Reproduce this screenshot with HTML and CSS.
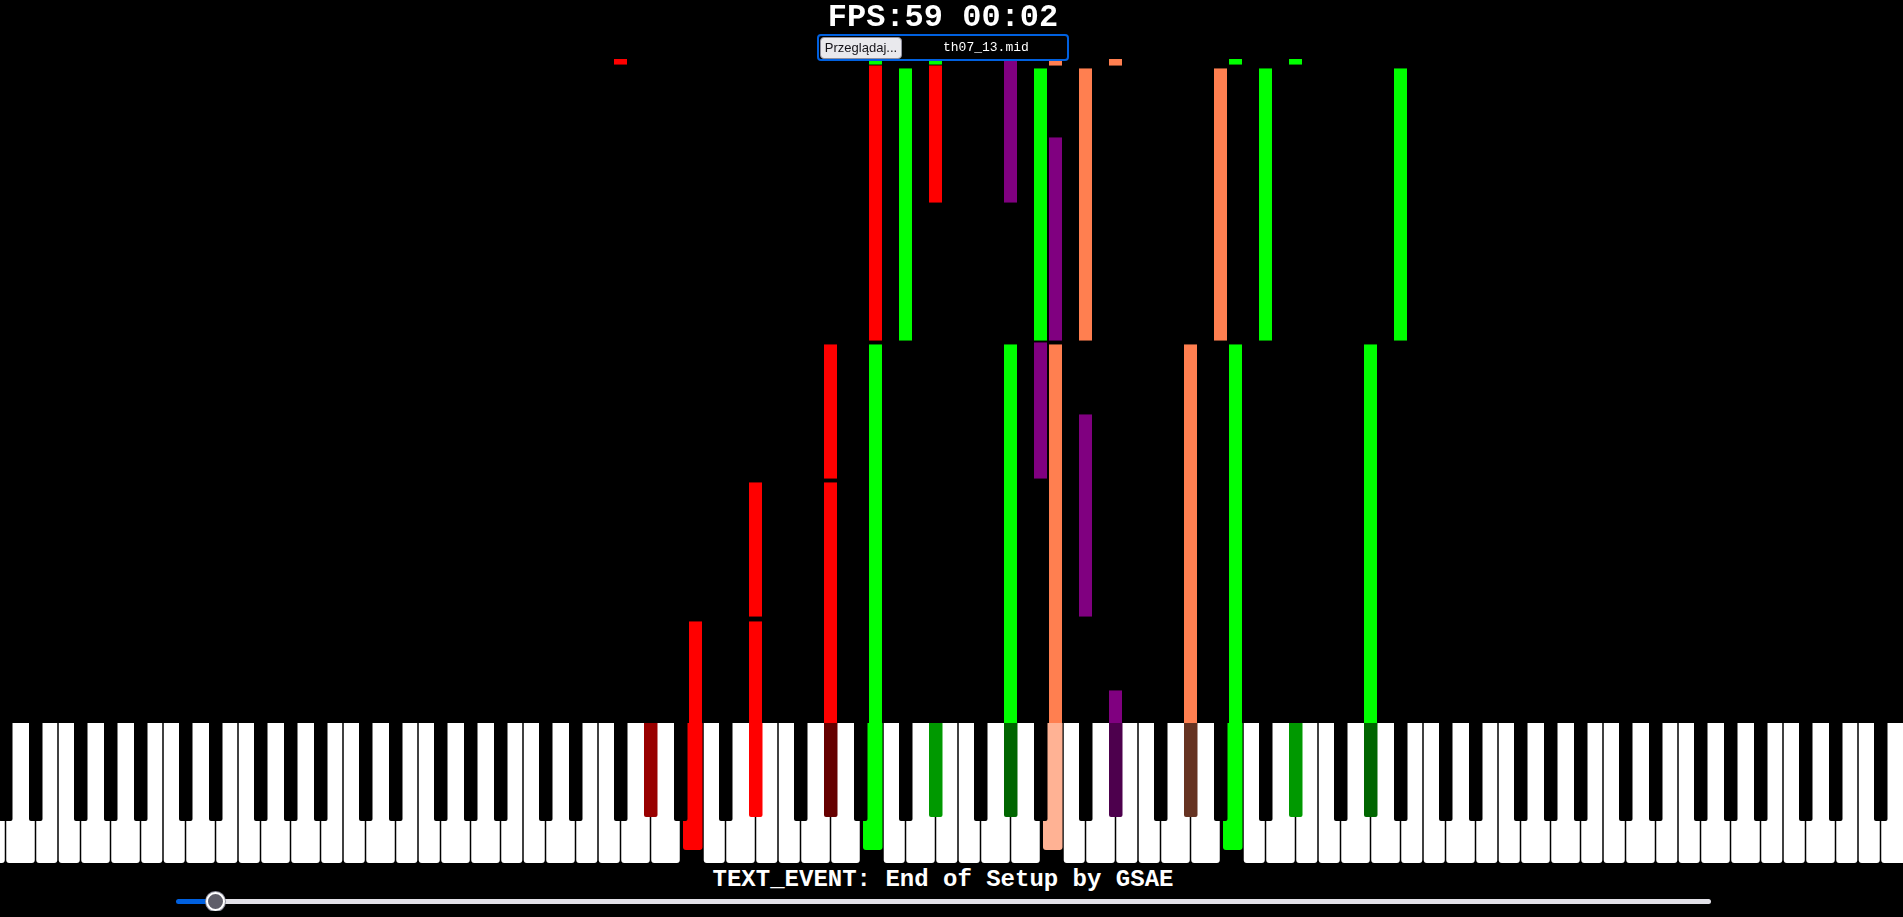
FILE: index.html
```html
<!DOCTYPE html>
<html>
    <head>
        <meta charset="utf-8">
        <title>MIDI Player</title>
        <link rel="stylesheet" href="styles.css">
    </head>
    <body>
        <div class="player">
            <canvas id="roll" class="roll" width="1903" height="863"></canvas>
            <div class="hud">
                <div class="fps" id="fps">FPS:59 00:02</div>
                <label class="picker">
                    <span class="picker-button">Przeglądaj...</span>
                    <span class="picker-name">th07_13.mid</span>
                </label>
            </div>
        </div>
        <div class="footer">
            <div class="text-event" id="event">TEXT_EVENT: End of Setup by GSAE</div>
            <input type="range" class="seek" id="seek" min="0" max="100" value="2">
        </div>
        <script src="app.js"></script>
    </body>
</html>
```

FILE: styles.css
```css
body {
    margin: 0;
    padding: 0;
    background: #000;
    overflow: hidden;
    font-family: "Liberation Mono", monospace;
}
.player {
    position: relative;
    width: 1903px;
    height: 863px;
}
.roll {
    display: block;
}
.hud {
    position: absolute;
    top: 0;
    left: 0;
    width: 1886px;
    display: flex;
    flex-direction: column;
    align-items: center;
}
.fps {
    font: bold 32px/36px "Liberation Mono", monospace;
    color: #fff;
    margin-bottom: -2px;
}
.picker {
    display: flex;
    align-items: flex-start;
    box-sizing: border-box;
    width: 252px;
    height: 27px;
    padding: 1px 0 0 1px;
    border: 2px solid #0060df;
    border-radius: 4px;
    background: #000;
}
.picker-button {
    box-sizing: border-box;
    width: 82px;
    height: 22px;
    line-height: 20px;
    text-align: center;
    background: #e9e9ed;
    border: 1px solid #8f8f9d;
    border-radius: 4px;
    color: #15141a;
    font: 13px/20px "Liberation Sans", Arial, sans-serif;
}
.picker-name {
    padding-left: 41px;
    color: #fff;
    font: 13px/22px "Liberation Mono", monospace;
}
.footer {
    width: 1886px;
    display: flex;
    flex-direction: column;
    align-items: center;
    padding-top: 5px;
}
.text-event {
    font: bold 24px/24px "Liberation Mono", monospace;
    color: #fff;
}
.seek {
    -webkit-appearance: none;
    appearance: none;
    width: 1535px;
    height: 19px;
    margin: 0;
    background: transparent;
}
.seek::-webkit-slider-runnable-track {
    height: 5px;
    border-radius: 3px;
    background: linear-gradient(to right, #0060df 0 39px, #e1e0e7 39px);
}
.seek::-webkit-slider-thumb {
    -webkit-appearance: none;
    width: 19px;
    height: 19px;
    margin-top: -7px;
    box-sizing: border-box;
    border-radius: 50%;
    background: #5f5e69;
    border: 2px solid #fff;
    box-shadow: 0 0 0 1px #8f8f9d;
}
```

FILE: app.js
```js
var canvas = document.getElementById('roll');
var ctx = canvas.getContext('2d');

var ROLL_TOP = 59;
var KEY_TOP = 723;
var KEY_HEIGHT = 140;
var BLACK_HEIGHT = 98;
var BLACK = [1, 3, 6, 8, 10];

function isBlack(n) { return BLACK.indexOf(((n % 12) + 12) % 12) >= 0; }
function keyX(n) { return 15 * n - 16; }
function center(n) { return 15 * n - 9.5; }

// falling notes: [key, top, bottom, colour]
var notes = [
    [42, 40, 65, '#ff0000'],
    [59, 40, 65, '#00ff00'],
    [59, 65, 341, '#ff0000'],
    [61, 68, 341, '#00ff00'],
    [63, 40, 65, '#00ff00'],
    [63, 65, 203, '#ff0000'],
    [68, 40, 203, '#800080'],
    [70, 68, 341, '#00ff00'],
    [71, 40, 66, '#ff7f50'],
    [71, 137, 341, '#800080'],
    [73, 68, 341, '#ff7f50'],
    [75, 40, 66, '#ff7f50'],
    [82, 68, 341, '#ff7f50'],
    [83, 40, 65, '#00ff00'],
    [85, 68, 341, '#00ff00'],
    [87, 40, 65, '#00ff00'],
    [94, 68, 341, '#00ff00'],
    [56, 344, 479, '#ff0000'],
    [56, 482, 730, '#ff0000'],
    [59, 344, 730, '#00ff00'],
    [68, 344, 730, '#00ff00'],
    [70, 342, 479, '#800080'],
    [71, 344, 730, '#ff7f50'],
    [73, 414, 617, '#800080'],
    [80, 344, 730, '#ff7f50'],
    [83, 344, 730, '#00ff00'],
    [92, 344, 730, '#00ff00'],
    [51, 482, 617, '#ff0000'],
    [51, 621, 730, '#ff0000'],
    [47, 621, 730, '#ff0000'],
    [75, 690, 730, '#800080']
];

// keys held down right now
var pressed = {
    44: '#990000', 47: '#ff0000', 51: '#ff0000', 56: '#660000',
    59: '#00ff00', 63: '#009900', 68: '#006600', 71: '#ffb294',
    75: '#4d004d', 80: '#663322', 83: '#00ff00', 87: '#009900', 92: '#006600'
};

function shade(hex, f) {
    var v = parseInt(hex.slice(1), 16);
    var r = Math.round(((v >> 16) & 255) * f);
    var g = Math.round(((v >> 8) & 255) * f);
    var b = Math.round((v & 255) * f);
    return 'rgb(' + r + ',' + g + ',' + b + ')';
}

function roundBottom(x, y, w, h, r) {
    ctx.beginPath();
    ctx.moveTo(x, y);
    ctx.lineTo(x + w, y);
    ctx.lineTo(x + w, y + h - r);
    ctx.quadraticCurveTo(x + w, y + h, x + w - r, y + h);
    ctx.lineTo(x + r, y + h);
    ctx.quadraticCurveTo(x, y + h, x, y + h - r);
    ctx.closePath();
    ctx.fill();
}

function drawNotes() {
    ctx.save();
    ctx.beginPath();
    ctx.rect(0, ROLL_TOP, canvas.width, KEY_TOP - ROLL_TOP);
    ctx.clip();
    notes.forEach(function (n) {
        var x = keyX(n[0]);
        var h = n[2] - n[1];
        ctx.fillStyle = shade(n[3], 0.55);
        ctx.fillRect(x, n[1], 13, h);
        ctx.fillStyle = n[3];
        ctx.fillRect(x, n[1] + 1, 13, h - 2);
    });
    ctx.restore();
}

function drawKeys() {
    for (var n = 0; n < 128; n++) {
        if (isBlack(n)) continue;
        var c = center(n);
        var left = isBlack(n - 1) ? c - 15 : c - 7.5;
        var right = isBlack(n + 1) ? c + 15 : c + 7.5;
        if (pressed[n]) {
            ctx.fillStyle = pressed[n];
            roundBottom(left + 2.5, KEY_TOP, right - left - 3, KEY_HEIGHT - 13, 3);
        } else {
            ctx.fillStyle = '#fff';
            roundBottom(left + 0.75, KEY_TOP, right - left - 1.5, KEY_HEIGHT, 3);
        }
    }
    for (var k = 0; k < 128; k++) {
        if (!isBlack(k)) continue;
        if (pressed[k]) {
            ctx.fillStyle = pressed[k];
            roundBottom(keyX(k), KEY_TOP, 13.5, BLACK_HEIGHT - 4, 2);
        } else {
            ctx.fillStyle = '#000';
            roundBottom(keyX(k), KEY_TOP, 13.5, BLACK_HEIGHT, 2);
        }
    }
}

ctx.fillStyle = '#000';
ctx.fillRect(0, 0, canvas.width, canvas.height);
drawNotes();
drawKeys();
```
